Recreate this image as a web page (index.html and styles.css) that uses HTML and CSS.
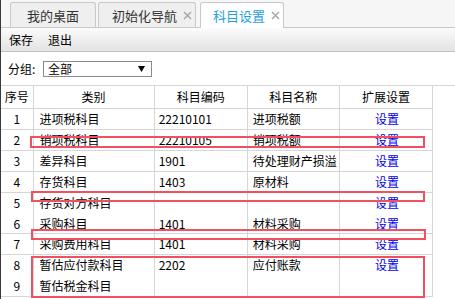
FILE: index.html
```html
<!DOCTYPE html>
<html lang="zh">
<head>
<meta charset="utf-8">
<title>科目设置</title>
<link rel="stylesheet" href="styles.css">
</head>
<body>
<div class="tabs">
  <div class="tab t1">我的桌面</div>
  <div class="tab t2">初始化导航<svg class="x" width="9" height="9" viewBox="0 0 9 9"><path d="M1 1L8 8M8 1L1 8" stroke="#a0a0a0" stroke-width="1.2"/></svg></div>
  <div class="tab t3 active">科目设置<svg class="x" width="9" height="9" viewBox="0 0 9 9"><path d="M1 1L8 8M8 1L1 8" stroke="#a0a0a0" stroke-width="1.2"/></svg></div>
</div>
<div class="toolbar"><span>保存</span><span>退出</span></div>
<div class="filter">
  <span class="lbl">分组:</span>
  <div class="select"><span>全部</span><svg class="arrow" width="7" height="6" viewBox="0 0 7 6"><path d="M0 0H7L3.5 6Z" fill="#000"/></svg></div>
</div>
<div class="grid">
<table>
  <colgroup><col class="c1"><col class="c2"><col class="c3"><col class="c4"><col class="c5"></colgroup>
  <thead>
    <tr><th>序号</th><th>类别</th><th>科目编码</th><th>科目名称</th><th>扩展设置</th></tr>
  </thead>
  <tbody>
    <tr><td class="n">1</td><td class="k">进项税科目</td><td class="code">22210101</td><td class="name">进项税额</td><td class="op"><a>设置</a></td></tr>
    <tr><td class="n">2</td><td class="k">销项税科目</td><td class="code">22210105</td><td class="name">销项税额</td><td class="op"><a>设置</a></td></tr>
    <tr><td class="n">3</td><td class="k">差异科目</td><td class="code">1901</td><td class="name">待处理财产损溢</td><td class="op"><a>设置</a></td></tr>
    <tr><td class="n">4</td><td class="k">存货科目</td><td class="code">1403</td><td class="name">原材料</td><td class="op"><a>设置</a></td></tr>
    <tr class="joined"><td class="n">5</td><td class="k">存货对方科目</td><td class="code"></td><td class="name"></td><td class="op"><a>设置</a></td></tr>
    <tr class="short"><td class="n">6</td><td class="k">采购科目</td><td class="code">1401</td><td class="name">材料采购</td><td class="op"><a>设置</a></td></tr>
    <tr><td class="n">7</td><td class="k">采购费用科目</td><td class="code">1401</td><td class="name">材料采购</td><td class="op"><a>设置</a></td></tr>
    <tr class="joined"><td class="n">8</td><td class="k">暂估应付款科目</td><td class="code">2202</td><td class="name">应付账款</td><td class="op"><a>设置</a></td></tr>
    <tr><td class="n">9</td><td class="k">暂估税金科目</td><td class="code"></td><td class="name"></td><td class="op"></td></tr>
  </tbody>
</table>
</div>
<div class="mark m1"></div>
<div class="mark m2"></div>
<div class="mark m3"></div>
<div class="mark m4"></div>
</body>
</html>
```
FILE: styles.css
```css
html, body {
  margin: 0;
  padding: 0;
}
body {
  position: relative;
  width: 455px;
  height: 299px;
  box-sizing: border-box;
  overflow: hidden;
  border-left: 1px solid #3a3a3a;
  background: #fff;
  font-family: "Noto Sans CJK SC", "Noto Sans", sans-serif;
  font-size: 12px;
  color: #000;
}

/* tabs */
.tabs {
  height: 27px;
  display: flex;
  align-items: flex-end;
  padding-left: 9px;
  background: #f6f6f6;
  border-bottom: 1px solid #c9c9c9;
}
.tab {
  height: 25px;
  box-sizing: border-box;
  display: flex;
  align-items: center;
  border: 1px solid #c9c9c9;
  border-bottom: none;
  border-radius: 3px 3px 0 0;
  background: #efefef;
  color: #333;
  font-size: 13px;
  line-height: 1;
}
.t1 {
  width: 86px;
  justify-content: center;
}
.t2 {
  width: 98px;
  margin-left: 2px;
  padding-left: 13px;
}
.t3 {
  width: 84px;
  margin-left: 4px;
  padding-left: 12px;
}
.tab .x {
  margin-left: 6px;
}
.active {
  background: #fff;
  color: #1e9fe0;
  height: 26px;
  margin-bottom: -1px;
}

/* toolbar */
.toolbar {
  height: 23px;
  display: flex;
  align-items: center;
  gap: 15px;
  padding-left: 8px;
  background: linear-gradient(#fbfbfb, #e3e3e3);
  border-bottom: 1px solid #c3c3c3;
  font-size: 12px;
}

/* filter */
.filter {
  height: 33px;
  display: flex;
  align-items: center;
  padding-left: 7px;
}
.lbl {
  width: 35px;
}
.select {
  width: 109px;
  height: 16px;
  box-sizing: border-box;
  border: 1px solid #8a8a8a;
  display: flex;
  align-items: center;
  justify-content: space-between;
  padding: 0 6px 0 4px;
  line-height: 1;
}

/* grid */
.grid {
  border-top: 1px solid #d6d6d6;
}
table {
  width: 432px;
  table-layout: fixed;
  border-collapse: collapse;
}
.c1 { width: 32px; }
.c2 { width: 121px; }
.c3 { width: 93px; }
.c4 { width: 92px; }
.c5 { width: 93px; }
th, td {
  border: 1px solid #d6d6d6;
  padding: 0;
  font-weight: normal;
  white-space: nowrap;
  overflow: hidden;
  line-height: 1;
}
th:first-child, td:first-child {
  border-left: none;
}
thead th {
  border-top: none;
  height: 22px;
  text-align: center;
}
tbody td {
  height: 20px;
}
td.n { text-align: center; }
td.k { padding-left: 6px; }
td.code { padding-left: 4px; }
td.name { padding-left: 5px; }
td.op { text-align: center; padding-left: 2px; }
td.op a {
  color: #0000ee;
  cursor: pointer;
}
tr.joined td {
  border-bottom-color: transparent;
}
tr.short td {
  height: 19px;
}

/* annotation boxes */
.mark {
  position: absolute;
  box-sizing: border-box;
  border: 2px solid #f0505f;
}
.m1 { left: 29px; top: 136px; width: 395px; height: 12px; }
.m2 { left: 30px; top: 191px; width: 394px; height: 11px; }
.m3 { left: 30px; top: 229px; width: 395px; height: 11px; }
.m4 { left: 30px; top: 256px; width: 394px; height: 42px; }
```
